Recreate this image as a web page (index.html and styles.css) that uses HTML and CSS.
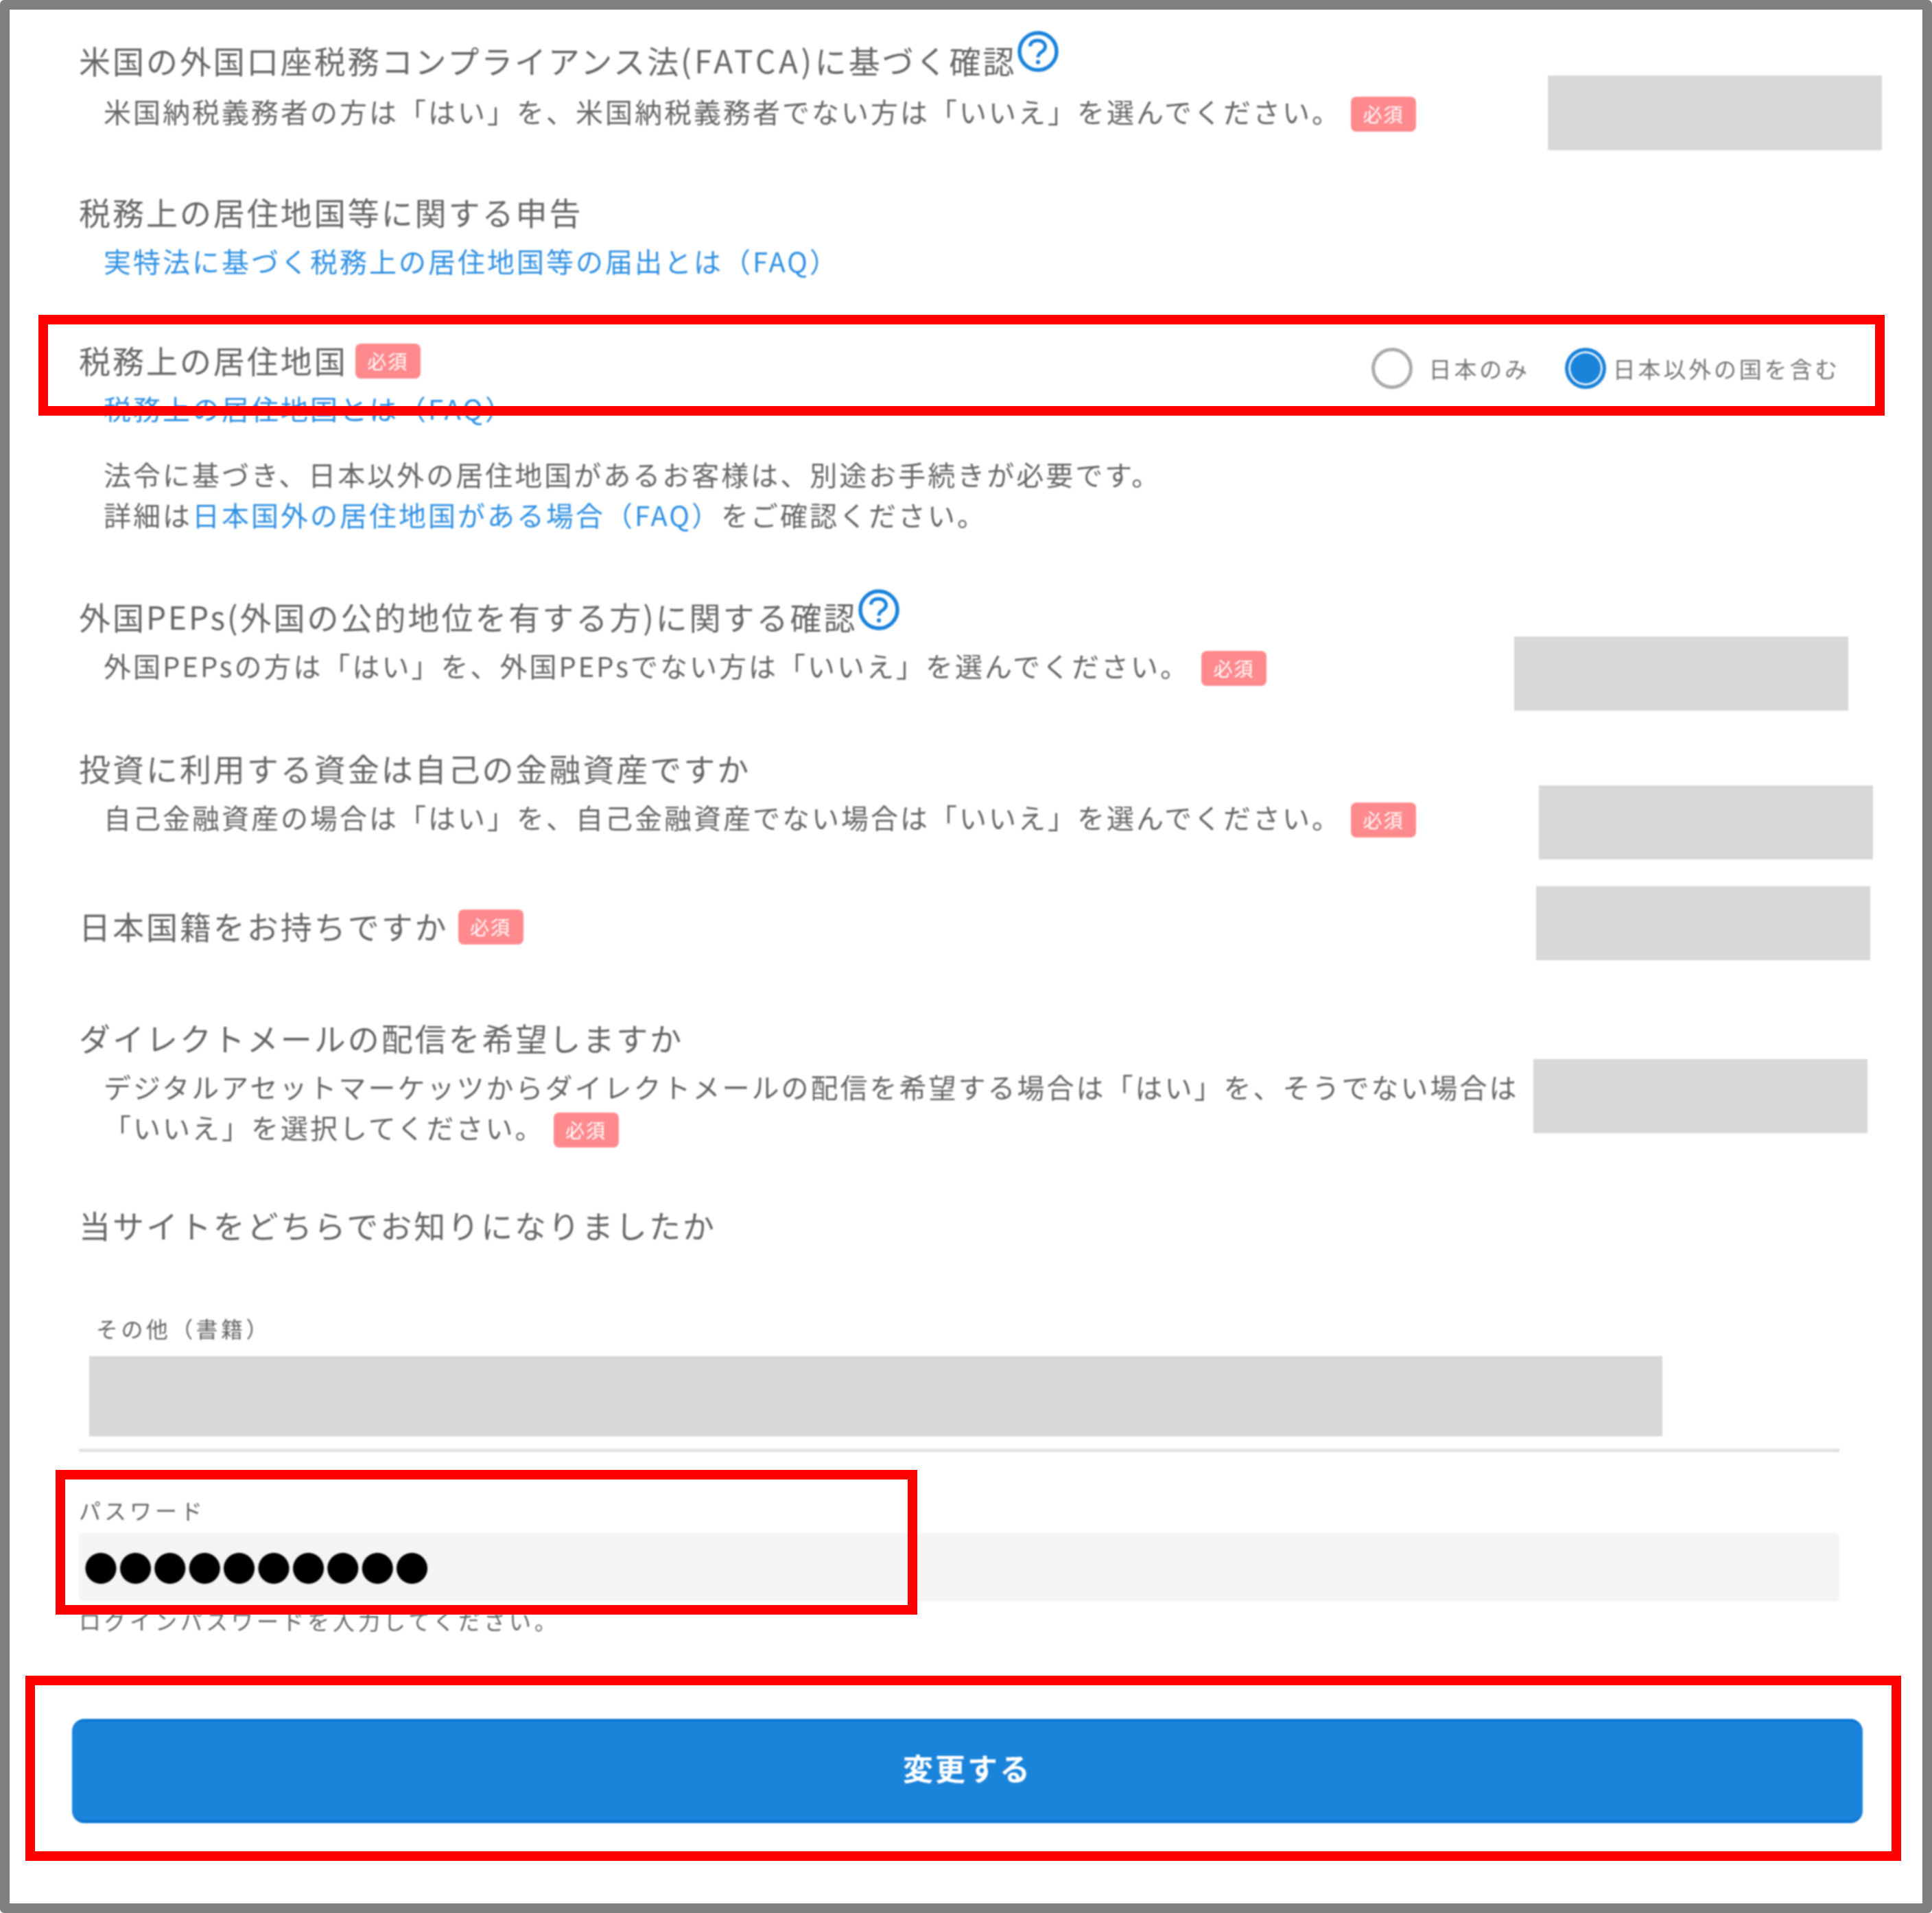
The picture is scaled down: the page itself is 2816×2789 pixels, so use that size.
FILE: index.html
```html
<!DOCTYPE html>
<html lang="ja">
<head>
<meta charset="utf-8">
<title>お客様情報の変更</title>
<link rel="stylesheet" href="styles.css">
</head>
<body>
<div class="shot">
  <main class="panel">
    <section class="row s1">
      <div class="col">
        <h2 class="head">米国の外国口座税務コンプライアンス法<span class="latin-wide">(FATCA)</span>に基づく確認<svg class="help help-a" viewBox="0 0 60 60"><circle cx="30" cy="30" r="27" fill="none" stroke="#1a83da" stroke-width="5.5"/><path d="M18.500 22.500C18.500 16.500 23.500 14 29.500 14C36 14 40.500 18 40.500 23C40.500 27 38 29 34.800 31C31.800 33 30 34.500 30 38.500" fill="none" stroke="#1a83da" stroke-width="5"/><circle cx="30" cy="45.500" r="3.100" fill="#1a83da"/></svg></h2>
        <p class="sub sub-first">米国納税義務者の方は「はい」を、米国納税義務者でない方は「いいえ」を選んでください。<span class="badge b1">必須</span></p>
      </div>
      <div class="blank blank-1"></div>
    </section>

    <section class="block s2">
      <h2 class="head">税務上の居住地国等に関する申告</h2>
      <p class="sub"><a class="link">実特法に基づく税務上の居住地国等の届出とは（FAQ）</a></p>
    </section>

    <section class="row s3">
      <div class="col">
        <h2 class="head">税務上の居住地国<span class="badge b2">必須</span></h2>
        <p class="sub sub-tight"><a class="link">税務上の居住地国とは（FAQ）</a></p>
      </div>
      <div class="radios">
        <label class="opt"><span class="radio"></span><span class="opt-text">日本のみ</span></label>
        <label class="opt opt-on"><span class="radio radio-on"></span><span class="opt-text">日本以外の国を含む</span></label>
      </div>
    </section>

    <p class="sub note">法令に基づき、日本以外の居住地国があるお客様は、別途お手続きが必要です。<br>詳細は<a class="link">日本国外の居住地国がある場合（FAQ）</a>をご確認ください。</p>

    <section class="row s4">
      <div class="col">
        <h2 class="head">外国PEPs(外国の公的地位を有する方)に関する確認<svg class="help help-b" viewBox="0 0 60 60"><circle cx="30" cy="30" r="27" fill="none" stroke="#1a83da" stroke-width="5.5"/><path d="M18.500 22.500C18.500 16.500 23.500 14 29.500 14C36 14 40.500 18 40.500 23C40.500 27 38 29 34.800 31C31.800 33 30 34.500 30 38.500" fill="none" stroke="#1a83da" stroke-width="5"/><circle cx="30" cy="45.500" r="3.100" fill="#1a83da"/></svg></h2>
        <p class="sub">外国PEPsの方は「はい」を、外国PEPsでない方は「いいえ」を選んでください。<span class="badge b3">必須</span></p>
      </div>
      <div class="blank blank-2"></div>
    </section>

    <section class="row s5">
      <div class="col">
        <h2 class="head">投資に利用する資金は自己の金融資産ですか</h2>
        <p class="sub">自己金融資産の場合は「はい」を、自己金融資産でない場合は「いいえ」を選んでください。<span class="badge b1">必須</span></p>
      </div>
      <div class="blank blank-3"></div>
    </section>

    <section class="row s6">
      <h2 class="head head-low">日本国籍をお持ちですか<span class="badge b4">必須</span></h2>
      <div class="blank blank-4"></div>
    </section>

    <section class="row s7">
      <div class="col">
        <h2 class="head">ダイレクトメールの配信を希望しますか</h2>
        <p class="sub">デジタルアセットマーケッツからダイレクトメールの配信を希望する場合は「はい」を、そうでない場合は<br>「いいえ」を選択してください。<span class="badge b5">必須</span></p>
      </div>
      <div class="blank blank-5"></div>
    </section>

    <h2 class="head s8">当サイトをどちらでお知りになりましたか</h2>
    <p class="small other-label">その他（書籍）</p>
    <div class="blank-wide"></div>
    <hr class="rule">
    <p class="small pw-label">パスワード</p>
    <div class="pw-input">●●●●●●●●●●</div>
    <p class="small pw-hint">ログインパスワードを入力してください。</p>
    <button class="submit" type="button">変更する</button>
  </main>
  <div class="frame frame-residence"></div>
  <div class="frame frame-password"></div>
  <div class="frame frame-submit"></div>
</div>
</body>
</html>
```

FILE: styles.css
```css
* { box-sizing: border-box; }
html, body { margin: 0; padding: 0; background: #fff; }
.shot {
  position: relative;
  width: 2816px;
  height: 2789px;
  border: 14px solid #808080;
  border-radius: 6px;
  background: #fff;
  overflow: hidden;
  font-family: "Noto Sans CJK JP", "Noto Sans", sans-serif;
  color: #666;
}
.panel { padding: 46px 0 0 101px; filter: blur(0.9px); }
.row { display: flex; justify-content: space-between; align-items: flex-start; }
.head {
  display: block;
  margin: 0 0 6px;
  font-size: 46px;
  font-weight: 400;
  line-height: 54px;
  letter-spacing: 2.96px;
  white-space: nowrap;
}
.latin-wide { letter-spacing: 4.6px; }
.sub {
  margin: 16px 0 3px 36px;
  font-size: 40px;
  line-height: 59px;
  letter-spacing: 3px;
  white-space: nowrap;
}
.sub-first { margin-top: 19px; }
.sub-tight { margin-top: 15px; }
.link { color: #2f90e2; }
.small {
  margin: 0;
  font-size: 32px;
  line-height: 40px;
  letter-spacing: 5px;
  white-space: nowrap;
}
.badge {
  display: inline-block;
  width: 95px;
  height: 51px;
  margin-top: -12px;
  margin-bottom: -8px;
  border-radius: 8px;
  background: #ff8a8e;
  color: #fff;
  font-size: 28px;
  line-height: 51px;
  letter-spacing: 2px;
  text-align: center;
  vertical-align: middle;
}
.b1 { margin-left: 14px; }
.b2 { margin: -15px 0 -5px 11px; }
.b3 { margin-left: 17px; }
.b4 { margin: -15px 0 -5px 14px; }
.b5 { margin-left: 13px; }
.help { display: inline-block; width: 60px; height: 60px; vertical-align: top; }
.help-a { margin: -15px 0 0 2px; }
.help-b { margin: -12px 0 0 2px; }
.blank { flex: none; width: 487px; height: 108px; background: #d8d8d8; }
.blank-1 { margin: 50px 59px 0 0; height: 109px; }
.blank-2 { margin: 57px 108px 0 0; }
.blank-3 { margin: 53px 72px 0 0; }
.blank-4 { margin: 0 76px 0 0; }
.blank-5 { margin: 59px 80px 0 0; }
.s2 { margin-top: 62px; }
.s3 { margin-top: 87px; }
.note { margin-top: 34px; }
.s4 { margin-top: 91px; }
.s5 { margin-top: 56px; }
.s6 { margin-top: 39px; }
.head-low { margin-top: 30px; }
.s7 { margin-top: 85px; }
.s8 { margin-top: 82px; }
.radios { display: flex; align-items: center; margin: 10px 120px 0 0; }
.opt { display: flex; align-items: center; color: #777; font-size: 33px; line-height: 58px; letter-spacing: 3.8px; }
.opt-on { margin-left: 51px; }
.radio { flex: none; width: 60px; height: 60px; margin-right: 24px; border: 5px solid #aaa; border-radius: 50%; background: #fff; }
.radio-on { margin-right: 10px; border-color: #1a83da; background: #1a83da; box-shadow: inset 0 0 0 3px #e6f2fc; }
.other-label { margin: 104px 0 0 25px; letter-spacing: 4.4px; }
.blank-wide { width: 2293px; height: 117px; margin: 21px 0 0 15px; background: #d8d8d8; }
.rule { width: 2566px; height: 5px; margin: 18px 0 0; border: 0; background: #e2e2e2; }
.pw-label { margin-top: 64px; }
.pw-input {
  width: 2566px;
  height: 100px;
  margin-top: 14px;
  padding-left: 7px;
  border-radius: 6px;
  background: #f4f4f4;
  color: #000;
  font-size: 50px;
  line-height: 96px;
  letter-spacing: 0.4px;
  white-space: nowrap;
}
.pw-hint { margin-top: 7px; }
.submit {
  display: block;
  width: 2610px;
  height: 152px;
  margin: 124px 0 0 -10px;
  padding: 0 0 10px;
  border: 0;
  border-top: 4px solid #0a76d3;
  border-bottom: 4px solid #0a76d3;
  border-radius: 18px;
  background: #1a83da;
  color: #fff;
  font-family: inherit;
  font-size: 44px;
  font-weight: 700;
  letter-spacing: 3px;
}
.frame { position: absolute; border: 14px solid #f00; }
.frame-residence { left: 42px; top: 445px; width: 2691px; height: 147px; }
.frame-password { left: 67px; top: 2129px; width: 1256px; height: 211px; }
.frame-submit { left: 23px; top: 2429px; width: 2734px; height: 270px; }
```
